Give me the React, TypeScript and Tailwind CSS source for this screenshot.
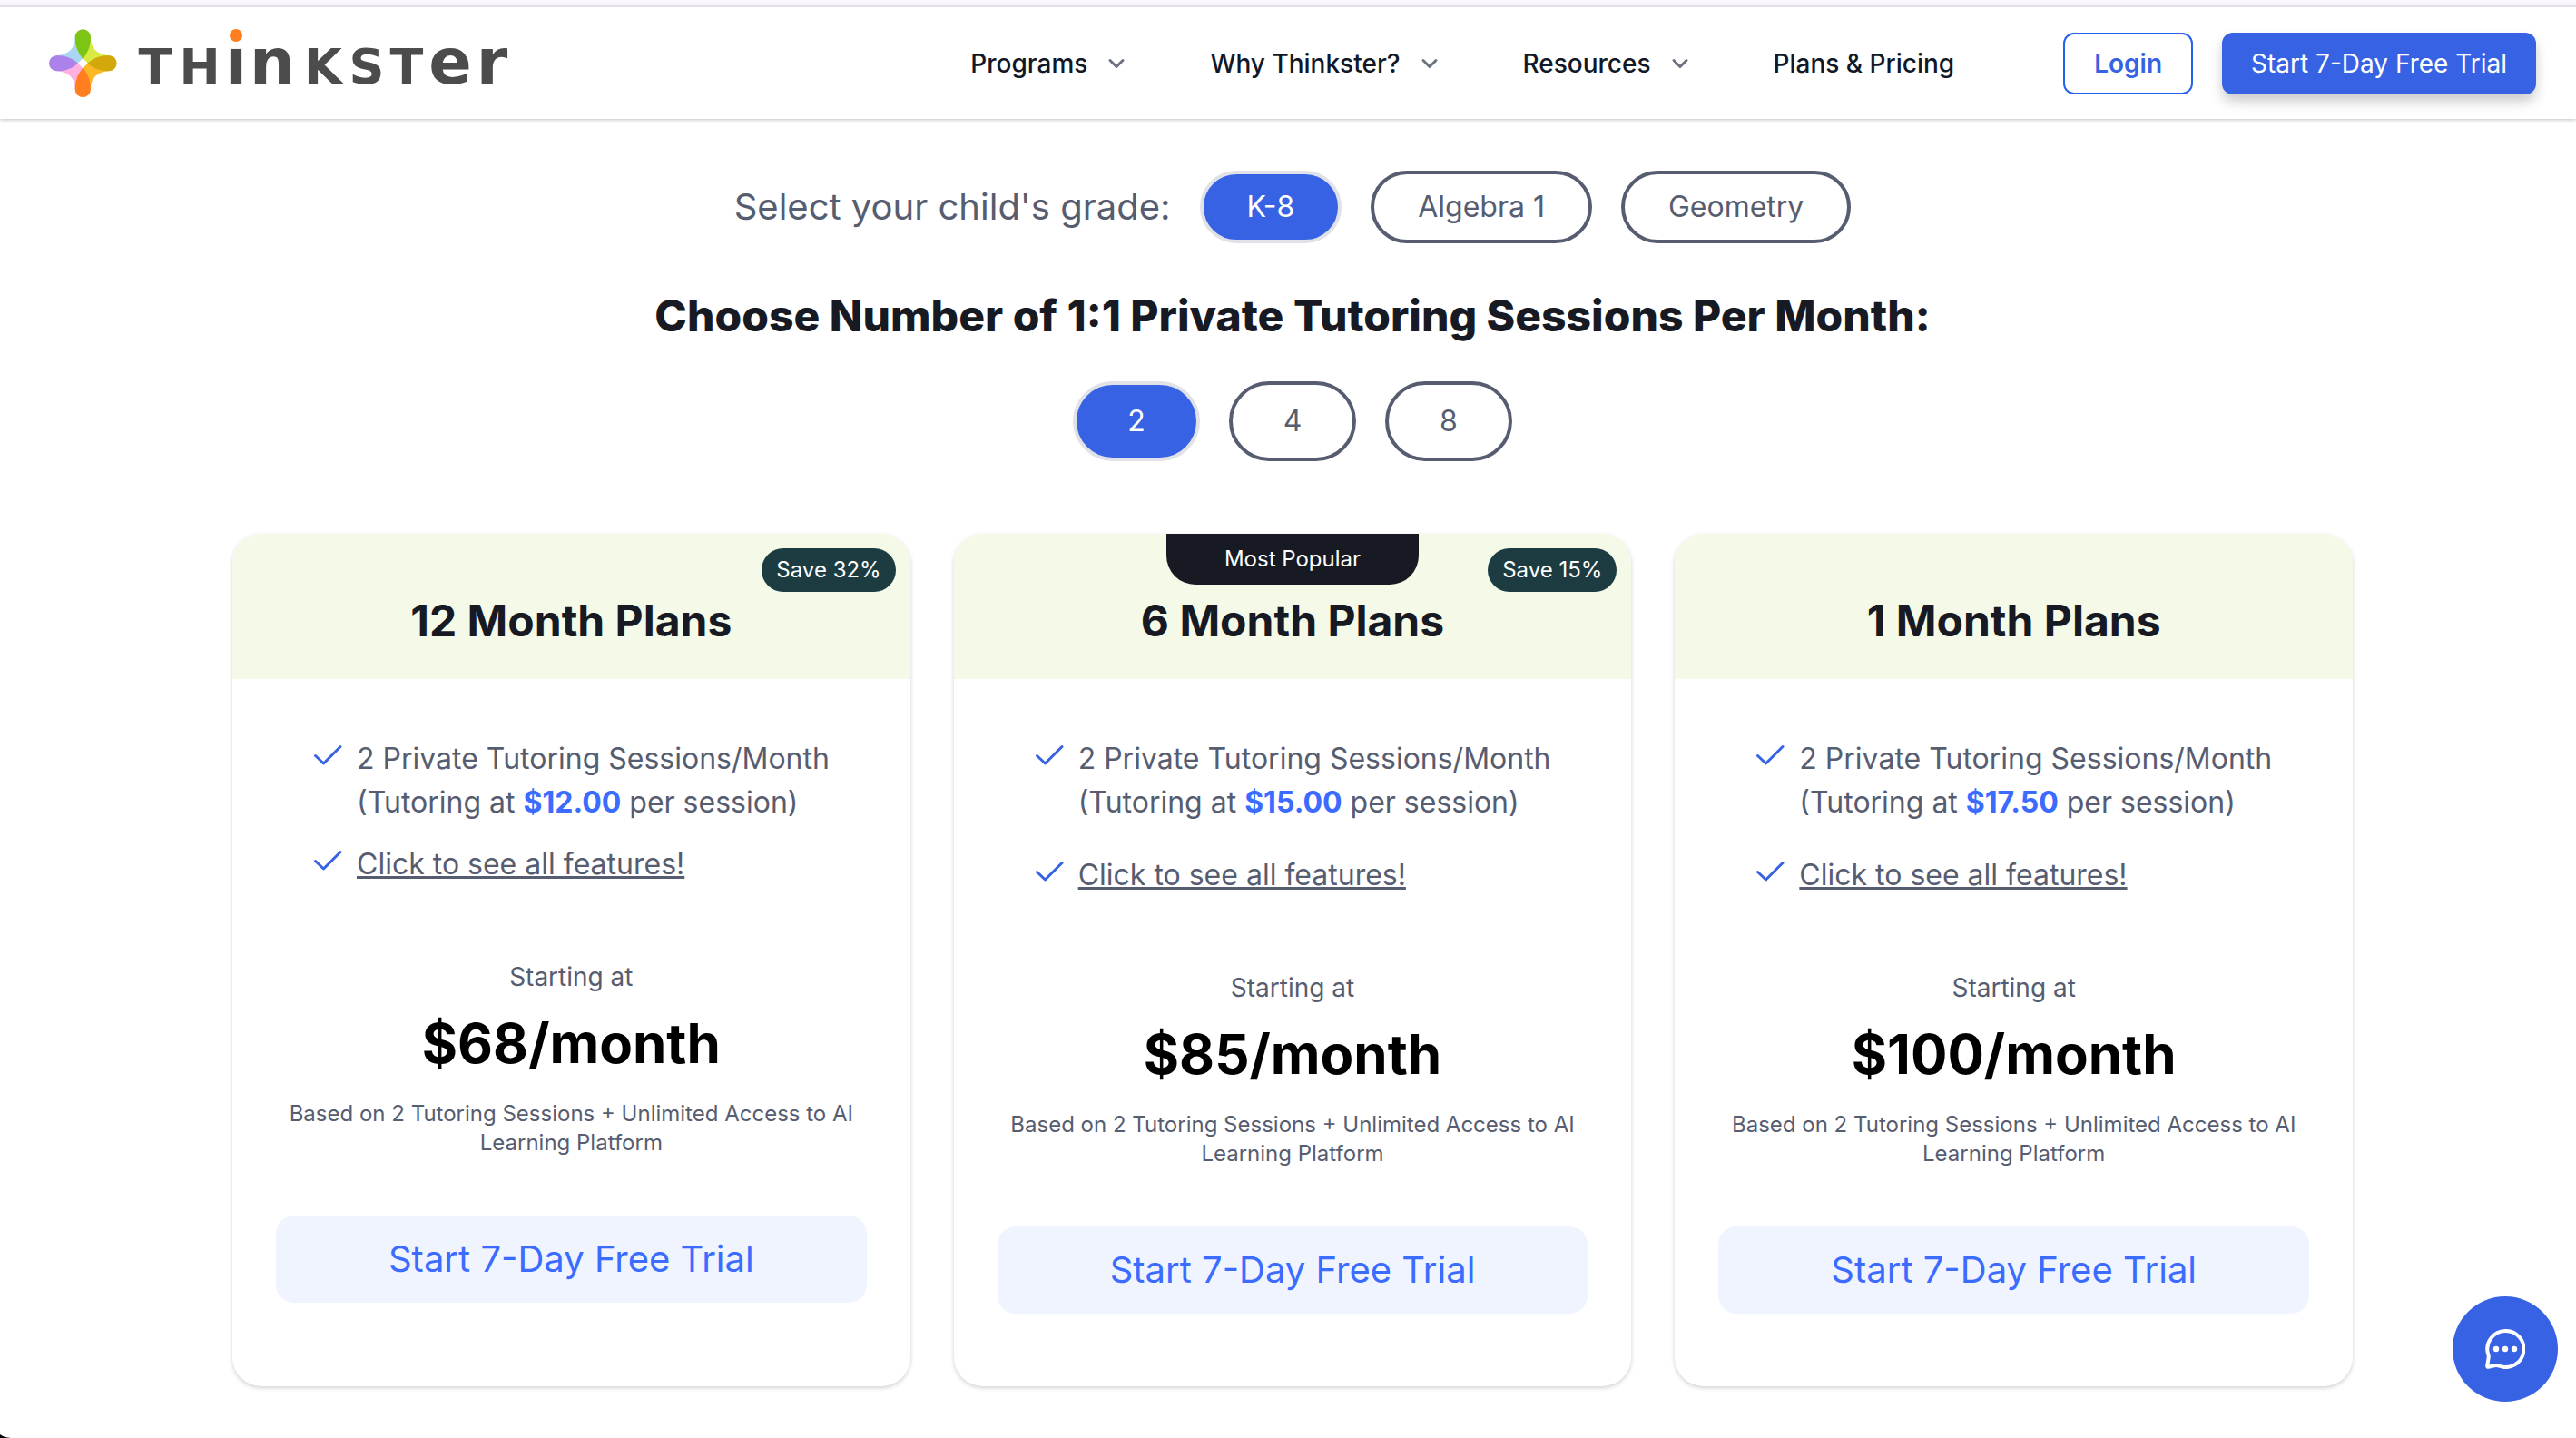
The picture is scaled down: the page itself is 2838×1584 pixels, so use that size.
import React, { useState } from "react";

const NAV = [
  { label: "Programs", menu: true },
  { label: "Why Thinkster?", menu: true },
  { label: "Resources", menu: true },
  { label: "Plans & Pricing", menu: false },
];

const PLANS = [
  { title: "12 Month Plans", save: "Save 32%", popular: false, rate: "$12.00", price: "$68/month", compact: true },
  { title: "6 Month Plans", save: "Save 15%", popular: true, rate: "$15.00", price: "$85/month", compact: false },
  { title: "1 Month Plans", save: "", popular: false, rate: "$17.50", price: "$100/month", compact: false },
];

function Logo() {
  return (
    <a href="#home" aria-label="Thinkster home" className="block shrink-0">
      <svg width="520" height="100" viewBox="0 -12 520 100" aria-hidden="true">
        <g transform="scale(0.3333) translate(-42 -36)">
          <path d="M68 123 C106 121 130 98 128 63 L154 133 L137 149 Z" fill="#abd6f1" />
          <path d="M180 63 C178 98 202 121 240 123 L170 149 L154 133 Z" fill="#d9ea42" />
          <path d="M240 175 C202 177 178 200 180 235 L154 165 L170 149 Z" fill="#fdb827" />
          <path d="M128 235 C130 200 106 177 68 175 L137 149 L154 165 Z" fill="#feb0df" />
          <path d="M154 134 C136 112 128 90 128 63 A26 26 0 0 1 180 63 C180 90 172 112 154 134Z" fill="#7cc514" />
          <path d="M169 149 C191 131 213 123 240 123 A26 26 0 0 1 240 175 C213 175 191 167 169 149Z" fill="#d3a80c" />
          <path d="M154 164 C172 186 180 208 180 235 A26 26 0 0 1 128 235 C128 208 136 186 154 164Z" fill="#ff7e20" />
          <path d="M138 149 C116 167 95 175 68 175 A26 26 0 0 1 68 123 C95 123 116 131 138 149Z" fill="#aa82e9" />
        </g>
        <g fill="#4c4c4c" fontFamily="'DejaVu Sans', sans-serif" fontWeight="700" textAnchor="middle">
          <text y="60" fontSize="54">
            <tspan x="117">T</tspan>
            <tspan x="166">H</tspan>
            <tspan x="302">K</tspan>
            <tspan x="350">S</tspan>
            <tspan x="394">T</tspan>
          </text>
          <text y="60" fontSize="70">
            <tspan x="206">ı</tspan>
            <tspan x="246">n</tspan>
            <tspan x="442">e</tspan>
            <tspan x="488">r</tspan>
          </text>
        </g>
        <circle cx="206" cy="7" r="7" fill="#ff7e20" />
      </svg>
    </a>
  );
}

function Chevron() {
  return (
    <svg width="24" height="24" viewBox="0 0 24 24" fill="none" stroke="#6b7280" strokeWidth="3" strokeLinecap="round" strokeLinejoin="round" aria-hidden="true">
      <path d="M5 8.5 L12 15.5 L19 8.5" />
    </svg>
  );
}

function Check() {
  return (
    <svg width="32" height="24" viewBox="0 0 32 24" fill="none" stroke="#3662e3" strokeWidth="3" strokeLinecap="round" strokeLinejoin="round" className="mt-2 shrink-0" aria-hidden="true">
      <path d="M2.5 12.5 L11.5 21 L30 2.5" />
    </svg>
  );
}

function Header() {
  return (
    <header className="border-t-2 border-[#e5deec] bg-white shadow-[0_1px_4px_rgba(0,0,0,0.25)]">
      <div className="flex h-[123px] items-center pr-11 pl-[54px]">
        <Logo />
        <nav className="ml-auto flex items-center gap-[91px] text-[28px] font-medium text-[#111827]">
          {NAV.map((item) =>
            item.menu ? (
              <button key={item.label} type="button" className="flex items-center gap-5 whitespace-nowrap">
                {item.label}
                <Chevron />
              </button>
            ) : (
              <a key={item.label} href="#pricing" className="whitespace-nowrap">
                {item.label}
              </a>
            )
          )}
        </nav>
        <div className="ml-[120px] flex items-center gap-8 text-[28px]">
          <button type="button" className="h-[68px] rounded-xl border-2 border-[#2563eb] px-8 font-semibold text-[#3662e3]">
            Login
          </button>
          <button type="button" className="h-[68px] rounded-xl bg-[#3662e3] px-8 whitespace-nowrap text-white shadow-[0_8px_14px_rgba(0,0,0,0.2)]">
            Start 7-Day Free Trial
          </button>
        </div>
      </div>
    </header>
  );
}

function Pill({ label, active, onClick, size }: { label: string; active: boolean; onClick: () => void; size: string }) {
  return (
    <button
      type="button"
      aria-pressed={active}
      onClick={onClick}
      className={`rounded-full border-4 text-[32px] ${size} ${
        active ? "border-[#e0e2e8] bg-[#3662e3] text-white" : "border-[#575d70] bg-white text-[#575d70]"
      }`}
    >
      {label}
    </button>
  );
}

function PlanCard({ plan, sessions }: { plan: (typeof PLANS)[number]; sessions: string }) {
  return (
    <article className="relative overflow-hidden rounded-[32px] bg-white pb-20 text-[#575d70] shadow-[0_2px_5px_rgba(0,0,0,0.18)]">
      <div className="flex h-40 items-end justify-center bg-[#f4f9e8] pb-8">
        <h3 className="text-[48px] leading-[64px] font-bold text-[#171923]">{plan.title}</h3>
      </div>
      {plan.popular && (
        <span className="absolute top-0 left-1/2 h-14 w-[278px] -translate-x-1/2 rounded-b-[32px] bg-[#171923] text-center text-[24px] leading-[56px] text-white">
          Most Popular
        </span>
      )}
      {plan.save && (
        <span className="absolute top-4 right-4 rounded-full bg-[#1c3c42] px-4 text-[24px] leading-[48px] text-white">
          {plan.save}
        </span>
      )}
      <ul className={`flex flex-col pt-16 pl-[89px] text-[32px] leading-[48px] ${plan.compact ? "gap-5" : "gap-8"}`}>
        <li className="flex gap-4">
          <Check />
          <span>
            {sessions} Private Tutoring Sessions/Month
            <br />
            (Tutoring at <strong className="font-bold text-[#3b6bff]">{plan.rate}</strong> per session)
          </span>
        </li>
        <li className="flex gap-4">
          <Check />
          <a href="#features" className="underline decoration-[3px]">
            Click to see all features!
          </a>
        </li>
      </ul>
      <div className="px-12 pt-20 text-center">
        <p className="text-[28px] leading-[40px]">Starting at</p>
        <p className="mt-4 text-[60px] leading-[75px] font-bold text-black">{plan.price}</p>
        <p className="mt-6 text-[24px] leading-[32px]">
          Based on {sessions} Tutoring Sessions + Unlimited Access to AI Learning Platform
        </p>
        <button type="button" className="mt-16 h-24 w-full rounded-[20px] bg-[#eff4ff] text-[40px] text-[#3b6bff]">
          Start 7-Day Free Trial
        </button>
      </div>
    </article>
  );
}

export default function App() {
  const [grade, setGrade] = useState("K-8");
  const [sessions, setSessions] = useState("2");
  return (
    <div className="min-h-screen bg-white font-['Inter',sans-serif]">
      <div className="h-1.5 bg-[#fdf7ff]" />
      <Header />
      <main className="flex flex-col items-center pt-[57px] pl-2.5">
        <div className="flex items-center gap-8">
          <span className="text-[40px] leading-[56px] text-[#575d70]">Select your child's grade:</span>
          {["K-8", "Algebra 1", "Geometry"].map((g) => (
            <Pill key={g} label={g} active={g === grade} onClick={() => setGrade(g)} size="h-20 px-12" />
          ))}
        </div>
        <h2 className="mt-12 text-[48px] leading-[64px] font-extrabold text-[#171923]">
          Choose Number of 1:1 Private Tutoring Sessions Per Month:
        </h2>
        <div className="mt-10 flex gap-8">
          {["2", "4", "8"].map((n) => (
            <Pill key={n} label={n} active={n === sessions} onClick={() => setSessions(n)} size="h-[88px] w-[140px]" />
          ))}
        </div>
        <section className="mt-20 grid w-full max-w-[2336px] grid-cols-3 gap-12">
          {PLANS.map((p) => (
            <PlanCard key={p.title} plan={p} sessions={sessions} />
          ))}
        </section>
      </main>
      <button type="button" aria-label="Open chat" className="fixed right-5 bottom-10 flex size-[116px] items-center justify-center rounded-full bg-[#3662e3]">
        <svg width="44" height="44" viewBox="0 0 44 44" fill="none" aria-hidden="true">
          <path d="M22 2 A20 20 0 1 1 15 40.5 Q13 39.8 10 40.3 L3.5 41.8 Q2 42 2.2 40.5 L3.6 32 Q4 30 3.3 28.2 A20 20 0 0 1 22 2 Z" stroke="#fff" strokeWidth="4" strokeLinejoin="round" />
          <circle cx="12" cy="22" r="3.2" fill="#fff" />
          <circle cx="22" cy="22" r="3.2" fill="#fff" />
          <circle cx="32" cy="22" r="3.2" fill="#fff" />
        </svg>
      </button>
      <svg width="12" height="4" viewBox="0 0 12 4" className="fixed bottom-0 left-0" aria-hidden="true">
        <path d="M0 0 Q4 3.5 12 4 L0 4 Z" fill="#000" />
      </svg>
    </div>
  );
}
